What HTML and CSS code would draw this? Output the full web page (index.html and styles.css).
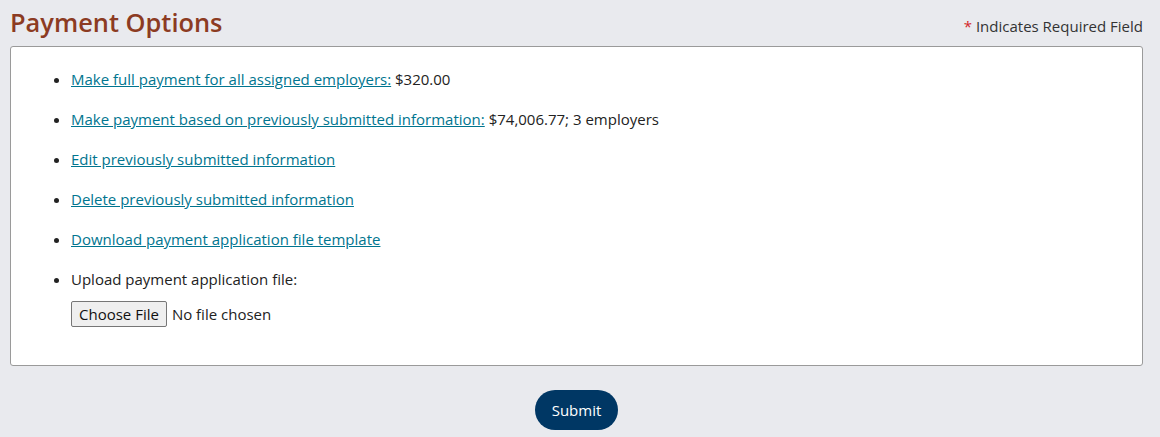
FILE: index.html
```html
<!DOCTYPE html>
<html lang="en">
<head>
<meta charset="utf-8">
<title>Payment Options</title>
<link rel="stylesheet" href="styles.css">
</head>
<body>
<div class="page">
  <div class="header">
    <h1 class="title">Payment Options</h1>
    <div class="required"><span class="star">*</span> Indicates Required Field</div>
  </div>
  <div class="panel">
    <ul class="options">
      <li><a href="#">Make full payment for all assigned employers:</a> $320.00</li>
      <li><a href="#">Make payment based on previously submitted information:</a> $74,006.77; 3 employers</li>
      <li><a href="#">Edit previously submitted information</a></li>
      <li><a href="#">Delete previously submitted information</a></li>
      <li><a href="#">Download payment application file template</a></li>
      <li>Upload payment application file:
        <div class="file-row"><span class="file-btn">Choose File</span><span class="file-name">No file chosen</span></div>
      </li>
    </ul>
  </div>
  <div class="actions">
    <button class="submit" type="button">Submit</button>
  </div>
</div>
</body>
</html>
```
FILE: styles.css
```css
html, body {
  margin: 0;
  padding: 0;
  background: #e9eaee;
}
body {
  font-family: "Open Sans", "Noto Sans", sans-serif;
  font-size: 15px;
  color: #222;
}
.page {
  padding: 0 17px 0 10px;
}
.header {
  display: flex;
  justify-content: space-between;
  align-items: flex-end;
  height: 46px;
}
.title {
  margin: 0;
  font-size: 25.4px;
  font-weight: 600;
  color: #8c3b22;
  line-height: 46px;
  position: relative;
  top: -1px;
}
.required {
  font-size: 15px;
  color: #333;
  line-height: 20px;
  margin-bottom: 10px;
}
.star {
  color: #d3262b;
}
.panel {
  background: #fff;
  border: 1px solid #9a9a9a;
  border-radius: 3px;
  height: 318px;
}
.options {
  margin: 0;
  padding: 22px 0 0 60px;
}
.options li {
  line-height: 20px;
  margin-bottom: 20px;
}
.options a {
  color: #00758f;
  text-decoration: underline;
}
.file-row {
  display: flex;
  align-items: center;
  margin-top: 12px;
}
.file-btn {
  display: inline-block;
  border: 1px solid #767676;
  background: #efefef;
  border-radius: 2px;
  padding: 0 7px;
  height: 24px;
  line-height: 24px;
  color: #111;
}
.file-name {
  margin-left: 5px;
}
.actions {
  display: flex;
  justify-content: center;
  padding-top: 24px;
}
.submit {
  background: #003764;
  color: #fff;
  border: none;
  border-radius: 20px;
  height: 40px;
  width: 83px;
  font-family: inherit;
  font-size: 15px;
  cursor: pointer;
}
```
